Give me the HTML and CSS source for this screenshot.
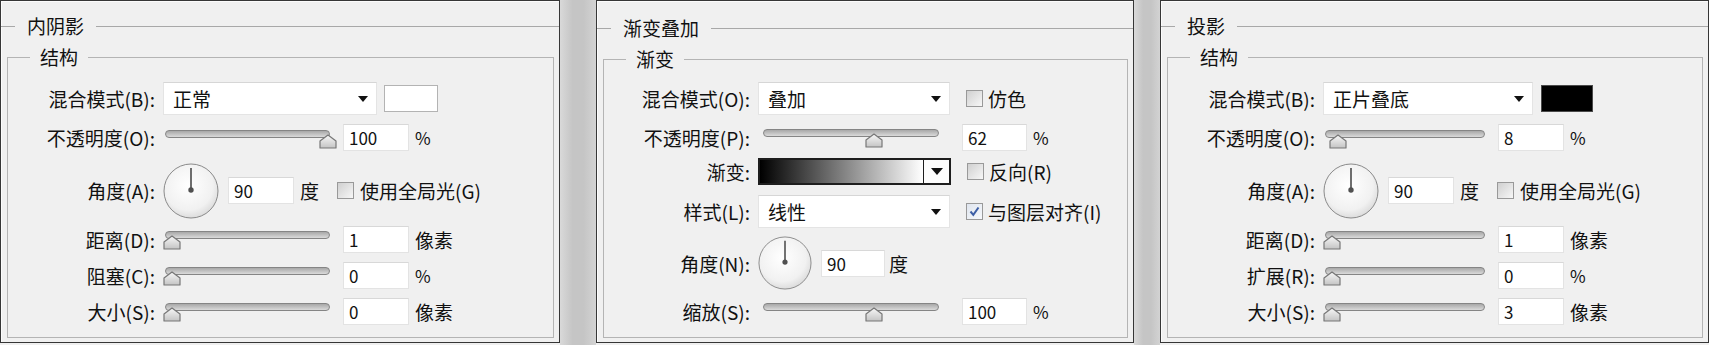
FILE: index.html
```html
<!DOCTYPE html>
<html lang="zh-CN">

<head>
    <meta charset="UTF-8">
    <meta name="viewport" content="width=device-width, initial-scale=1.0">
    <title>图层样式</title>
    <link rel="stylesheet" href="styles.css">
</head>

<body>
    <!-- shared drawings for the slider thumb, the angle dial and the tick -->
    <svg class="defs" aria-hidden="true">
        <defs>
            <linearGradient id="thumbFill" x1="0" y1="0" x2="0" y2="1">
                <stop offset="0" stop-color="#f8f8f8" />
                <stop offset="1" stop-color="#c4c4c4" />
            </linearGradient>
            <radialGradient id="dialFill" cx="45%" cy="40%" r="65%">
                <stop offset="0" stop-color="#ffffff" />
                <stop offset="0.7" stop-color="#f1f1f1" />
                <stop offset="1" stop-color="#d6d6d6" />
            </radialGradient>
            <path id="thumbShape" d="M9 1 L17 7 V14 H1 V7 Z" fill="url(#thumbFill)" stroke="#777" stroke-width="1.2" stroke-linejoin="round" />
            <g id="dialShape">
                <circle cx="28" cy="28" r="27" fill="url(#dialFill)" stroke="#8a8a8a" />
                <line x1="28" y1="5" x2="28" y2="26" stroke="#6e6e6e" stroke-width="2" />
                <circle cx="28" cy="27" r="2.7" fill="#505050" />
            </g>
            <path id="tickShape" d="M3.5 7.5 L6.3 10.8 L11.5 3.5" fill="none" stroke="#3d5fa6" stroke-width="2" />
        </defs>
    </svg>

    <div class="strip">
        <!-- 内阴影 -->
        <div class="panel panel-a">
            <fieldset class="section">
                <legend>内阴影</legend>
                <fieldset class="group">
                    <legend>结构</legend>
                    <div class="rows">
                        <div class="row">
                            <label class="lbl">混合模式(B):</label>
                            <div class="select"><span>正常</span><i class="caret"></i></div>
                            <span class="swatch"></span>
                        </div>
                        <div class="row">
                            <label class="lbl">不透明度(O):</label>
                            <div class="slider" style="--v: 1"><span class="track"></span><svg class="thumb" viewBox="0 0 18 15"><use href="#thumbShape" /></svg></div>
                            <input class="num" value="100">
                            <span class="unit pct">%</span>
                        </div>
                        <div class="row">
                            <label class="lbl">角度(A):</label>
                            <svg class="dial" viewBox="0 0 56 56"><use href="#dialShape" /></svg>
                            <input class="num" value="90">
                            <span class="unit">度</span>
                            <span class="check"></span>
                            <span>使用全局光(G)</span>
                        </div>
                        <div class="row">
                            <label class="lbl">距离(D):</label>
                            <div class="slider" style="--v: 0"><span class="track"></span><svg class="thumb" viewBox="0 0 18 15"><use href="#thumbShape" /></svg></div>
                            <input class="num" value="1">
                            <span class="unit">像素</span>
                        </div>
                        <div class="row">
                            <label class="lbl">阻塞(C):</label>
                            <div class="slider" style="--v: 0"><span class="track"></span><svg class="thumb" viewBox="0 0 18 15"><use href="#thumbShape" /></svg></div>
                            <input class="num" value="0">
                            <span class="unit pct">%</span>
                        </div>
                        <div class="row">
                            <label class="lbl">大小(S):</label>
                            <div class="slider" style="--v: 0"><span class="track"></span><svg class="thumb" viewBox="0 0 18 15"><use href="#thumbShape" /></svg></div>
                            <input class="num" value="0">
                            <span class="unit">像素</span>
                        </div>
                    </div>
                </fieldset>
            </fieldset>
        </div>

        <div class="gap gap-wide"></div>

        <!-- 渐变叠加 -->
        <div class="panel panel-b">
            <fieldset class="section">
                <legend>渐变叠加</legend>
                <fieldset class="group">
                    <legend>渐变</legend>
                    <div class="rows">
                        <div class="row">
                            <label class="lbl">混合模式(O):</label>
                            <div class="select"><span>叠加</span><i class="caret"></i></div>
                            <span class="check"></span>
                            <span>仿色</span>
                        </div>
                        <div class="row">
                            <label class="lbl">不透明度(P):</label>
                            <div class="slider" style="--v: .62"><span class="track"></span><svg class="thumb" viewBox="0 0 18 15"><use href="#thumbShape" /></svg></div>
                            <input class="num" value="62">
                            <span class="unit pct">%</span>
                        </div>
                        <div class="row">
                            <label class="lbl">渐变:</label>
                            <div class="ramp"><span class="ramp-fill"></span><span class="ramp-btn"><i class="caret"></i></span></div>
                            <span class="check"></span>
                            <span>反向(R)</span>
                        </div>
                        <div class="row">
                            <label class="lbl">样式(L):</label>
                            <div class="select"><span>线性</span><i class="caret"></i></div>
                            <span class="check checked"><svg viewBox="0 0 15 15"><use href="#tickShape" /></svg></span>
                            <span>与图层对齐(I)</span>
                        </div>
                        <div class="row">
                            <label class="lbl">角度(N):</label>
                            <svg class="dial" viewBox="0 0 56 56"><use href="#dialShape" /></svg>
                            <input class="num" value="90">
                            <span class="unit">度</span>
                        </div>
                        <div class="row">
                            <label class="lbl">缩放(S):</label>
                            <div class="slider" style="--v: .62"><span class="track"></span><svg class="thumb" viewBox="0 0 18 15"><use href="#thumbShape" /></svg></div>
                            <input class="num" value="100">
                            <span class="unit pct">%</span>
                        </div>
                    </div>
                </fieldset>
            </fieldset>
        </div>

        <div class="gap"></div>

        <!-- 投影 -->
        <div class="panel panel-c">
            <fieldset class="section">
                <legend>投影</legend>
                <fieldset class="group">
                    <legend>结构</legend>
                    <div class="rows">
                        <div class="row">
                            <label class="lbl">混合模式(B):</label>
                            <div class="select"><span>正片叠底</span><i class="caret"></i></div>
                            <span class="swatch black"></span>
                        </div>
                        <div class="row">
                            <label class="lbl">不透明度(O):</label>
                            <div class="slider" style="--v: .04"><span class="track"></span><svg class="thumb" viewBox="0 0 18 15"><use href="#thumbShape" /></svg></div>
                            <input class="num" value="8">
                            <span class="unit pct">%</span>
                        </div>
                        <div class="row">
                            <label class="lbl">角度(A):</label>
                            <svg class="dial" viewBox="0 0 56 56"><use href="#dialShape" /></svg>
                            <input class="num" value="90">
                            <span class="unit">度</span>
                            <span class="check"></span>
                            <span>使用全局光(G)</span>
                        </div>
                        <div class="row">
                            <label class="lbl">距离(D):</label>
                            <div class="slider" style="--v: 0"><span class="track"></span><svg class="thumb" viewBox="0 0 18 15"><use href="#thumbShape" /></svg></div>
                            <input class="num" value="1">
                            <span class="unit">像素</span>
                        </div>
                        <div class="row">
                            <label class="lbl">扩展(R):</label>
                            <div class="slider" style="--v: 0"><span class="track"></span><svg class="thumb" viewBox="0 0 18 15"><use href="#thumbShape" /></svg></div>
                            <input class="num" value="0">
                            <span class="unit pct">%</span>
                        </div>
                        <div class="row">
                            <label class="lbl">大小(S):</label>
                            <div class="slider" style="--v: 0"><span class="track"></span><svg class="thumb" viewBox="0 0 18 15"><use href="#thumbShape" /></svg></div>
                            <input class="num" value="3">
                            <span class="unit">像素</span>
                        </div>
                    </div>
                </fieldset>
            </fieldset>
        </div>
    </div>
</body>

</html>
```

FILE: styles.css
```css
* {
    box-sizing: border-box;
}

html,
body {
    margin: 0;
}

body {
    background-color: #efefef;
    font-family: "Noto Sans CJK SC", "Noto Sans", sans-serif;
    font-size: 19px;
    color: #111;
    overflow: hidden;
}

.defs {
    position: absolute;
    width: 0;
    height: 0;
}

.strip {
    display: flex;
    height: 345px;
}

/* panels */

.panel {
    flex: none;
    height: 343px;
    display: flex;
    flex-direction: column;
    background-color: #f0f0f0;
    border: 1px solid #363636;
    box-shadow: inset 1px 1px 0 #fcfcfc;
}

.panel-a {
    width: 560px;
}

.panel-b {
    width: 538px;
}

.panel-c {
    width: 549px;
}

.gap {
    flex: none;
    width: 26px;
    background: linear-gradient(to right, #d9d9d9, #c5c5c5 35%, #c5c5c5 65%, #d3d3d3);
}

.gap-wide {
    width: 36px;
}

/* group boxes */

fieldset {
    margin: 0;
    padding: 0;
    min-width: 0;
}

legend {
    height: 24px;
    line-height: 24px;
}

.section {
    flex: 1;
    display: flex;
    flex-direction: column;
    margin-top: 13px;
    border: 0;
    border-top: 1px solid #a8a8a8;
}

.section > legend {
    margin-left: 14px;
    padding: 0 12px;
}

.group {
    flex: 1;
    margin: 7px 5px 4px 6px;
    padding-top: 13px;
    border: 1px solid #b4b4b4;
}

.group > legend {
    margin-left: 22px;
    padding: 0 10px;
}

.panel-b .section {
    margin-top: 15px;
}

.panel-b .group {
    padding-top: 11px;
}

/* rows */

.rows {
    display: grid;
    grid-template-rows: 33px 45px 61px 36px 36px 36px;
}

.panel-b .rows {
    grid-template-rows: 33px 44px 25px 55px 48px 48px;
}

.row {
    display: flex;
    align-items: center;
    white-space: nowrap;
}

.lbl {
    flex: none;
    width: 147px;
    margin-right: 8px;
    text-align: right;
}

.panel-b .lbl {
    width: 146px;
}

/* controls */

.select {
    flex: none;
    display: flex;
    align-items: center;
    justify-content: space-between;
    width: 214px;
    height: 33px;
    padding: 0 8px 0 9px;
    background-color: #fff;
    border: 1px solid #e4e4e4;
    border-top-color: #d6d6d6;
}

.panel-b .select {
    width: 192px;
}

.panel-c .select {
    width: 210px;
}

.caret {
    width: 0;
    height: 0;
    border-left: 5.5px solid transparent;
    border-right: 5.5px solid transparent;
    border-top: 6px solid #111;
}

.swatch {
    flex: none;
    width: 54px;
    height: 27px;
    margin-left: 7px;
    background-color: #fff;
    border: 1px solid #b3b3b3;
}

.swatch.black {
    width: 52px;
    margin-left: 8px;
    background-color: #000;
    border-color: #4a4a4a;
}

.slider {
    flex: none;
    position: relative;
    width: 174px;
    height: 22px;
}

.panel-b .slider {
    width: 185px;
    margin-left: 3px;
}

.panel-c .slider {
    width: 169px;
}

.track {
    position: absolute;
    left: 2px;
    right: 7px;
    top: 3px;
    height: 8px;
    border: 1px solid #858585;
    border-radius: 4px;
    background: linear-gradient(#a8a8a8, #dadada);
}

.thumb {
    position: absolute;
    top: 7px;
    left: calc(var(--v) * (100% - 18px));
    width: 18px;
    height: 15px;
}

.num {
    flex: none;
    width: 66px;
    height: 27px;
    margin: 0 0 0 6px;
    padding: 0 5px;
    font-family: "Noto Sans CJK SC", "Noto Sans", sans-serif;
    font-size: 17px;
    color: #111;
    background-color: #fff;
    border: 1px solid #e3e3e3;
    border-top-color: #d8d8d8;
    outline: none;
}

.panel-b .num {
    width: 65px;
    margin-left: 16px;
}

.dial {
    flex: none;
    width: 56px;
    height: 56px;
}

.panel-b .dial {
    width: 54px;
    height: 54px;
}

.dial + .num {
    width: 66px;
    margin-left: 9px;
}

.panel-b .dial + .num {
    width: 64px;
}

.unit {
    margin-left: 6px;
}

.panel-b .dial ~ .unit {
    margin-left: 4px;
}

.pct {
    font-size: 17px;
}

.check {
    flex: none;
    width: 17px;
    height: 17px;
    margin: 0 6px 0 18px;
    background: linear-gradient(135deg, #d0d0d0, #f7f7f7);
    border: 1px solid #999;
}

.panel-b .check {
    margin: 0 5px 0 16px;
}

.check svg {
    display: block;
    width: 15px;
    height: 15px;
}

.check.checked {
    background: linear-gradient(135deg, #dfe5ee, #f7f9fc);
}

/* gradient picker */

.ramp {
    flex: none;
    display: flex;
    width: 193px;
    height: 27px;
    border: 2px solid #1e1e1e;
}

.ramp-fill {
    flex: 1;
    background: linear-gradient(to right, #000, #fff);
}

.ramp-btn {
    display: flex;
    align-items: center;
    justify-content: center;
    width: 26px;
    background-color: #fdfdfd;
    border-left: 1px solid #1e1e1e;
}

.ramp-btn .caret {
    border-left-width: 6.5px;
    border-right-width: 6.5px;
    border-top-width: 7px;
}
```
